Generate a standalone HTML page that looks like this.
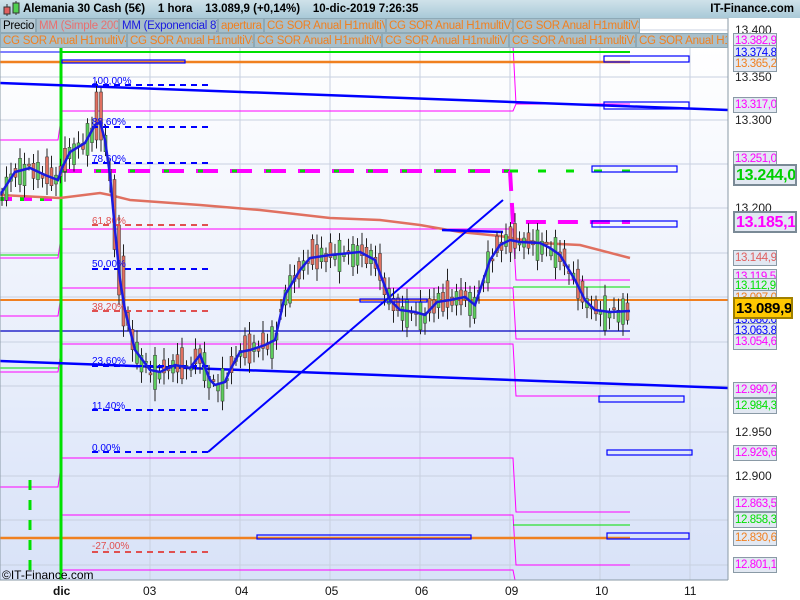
<!DOCTYPE html>
<html><head><meta charset="utf-8"><style>
body{margin:0;width:800px;height:600px;overflow:hidden;font-family:"Liberation Sans",sans-serif;background:#fff;position:relative}
#hdr{position:absolute;left:0;top:0;width:800px;height:18px;background:linear-gradient(#cfe2ea,#a9c9d8);font-size:11.5px;font-weight:bold;line-height:18px;z-index:2}
.tab{position:absolute;height:15px;line-height:14px;font-size:11.5px;letter-spacing:-0.25px;background:#a8bfca;border:1px solid #8ea9b6;box-sizing:border-box;padding-left:2px;color:#f08020;white-space:nowrap;overflow:hidden;z-index:2}
.lab{position:absolute;left:733px;width:44px;height:16px;line-height:15px;font-size:11.5px;background:#e2e8f2;border:1px solid #8a9aa6;box-sizing:border-box;padding-left:1px;letter-spacing:-0.4px;white-space:nowrap;overflow:hidden}
.big{width:64px;height:22px;line-height:19px;font-size:16px;font-weight:bold;border:2px solid #7a8a96;letter-spacing:-0.3px}
.ax{position:absolute;left:735px;font-size:12px;color:#222}
.dx{position:absolute;top:584px;font-size:12px;color:#111}
</style></head><body>
<div id="hdr">
<svg width="22" height="18" style="position:absolute;left:2px;top:0"><line x1="5" y1="4" x2="5" y2="16" stroke="#333"/><rect x="2" y="7" width="6" height="7" fill="#e06060" stroke="#333"/><line x1="14" y1="1" x2="14" y2="15" stroke="#333"/><rect x="11" y="3" width="6" height="10" fill="#50d050" stroke="#333"/></svg>
<span style="position:absolute;left:23px">Alemania 30 Cash (5€)&nbsp;&nbsp;&nbsp; 1 hora&nbsp;&nbsp;&nbsp; 13.089,9 (+0,14%)&nbsp;&nbsp;&nbsp; 10-dic-2019 7:26:35</span>
<span style="position:absolute;right:6px">IT-Finance.com</span>
</div>
<svg id="c" width="800" height="600" style="position:absolute;left:0;top:0" xmlns="http://www.w3.org/2000/svg">
<defs><linearGradient id="bg" x1="0" y1="0" x2="0" y2="1"><stop offset="0" stop-color="#ffffff"/><stop offset="1" stop-color="#d8e2f8"/></linearGradient><clipPath id="cp"><rect x="0" y="48" width="728" height="532"/></clipPath></defs>
<rect x="0" y="48" width="728" height="532" fill="url(#bg)"/>
<g id="grid" stroke="#c8d0e0" stroke-width="1"></g>
<g id="g" clip-path="url(#cp)"></g>
<rect x="0" y="18" width="728" height="562" fill="none" stroke="#8a9aa6"/>
<rect x="0" y="580" width="800" height="20" fill="#fff"/>
<line x1="0" y1="580" x2="728" y2="580" stroke="#8a9aa6"/>
<line x1="728" y1="18" x2="728" y2="580" stroke="#8a9aa6"/>
</svg>
<div class="tab" style="left:0;top:18px;width:36px;color:#000;background:#b5c9d3">Precio</div>
<div class="tab" style="left:36px;top:18px;width:83px;color:#e87070">MM (Simple 200)</div>
<div class="tab" style="left:119px;top:18px;width:99px;color:#1a1ae0">MM (Exponencial 8)</div>
<div class="tab" style="left:218px;top:18px;width:46px">apertura</div>
<div class="tab" style="left:264px;top:18px;width:122px">CG SOR Anual H1multiV</div>
<div class="tab" style="left:386px;top:18px;width:127px">CG SOR Anual H1multiV2</div>
<div class="tab" style="left:513px;top:18px;width:127px">CG SOR Anual H1multiV3</div>
<div class="tab" style="left:0;top:33px;width:127px">CG SOR Anual H1multiV4</div>
<div class="tab" style="left:127px;top:33px;width:127px">CG SOR Anual H1multiV5</div>
<div class="tab" style="left:254px;top:33px;width:128px">CG SOR Anual H1multiV6</div>
<div class="tab" style="left:382px;top:33px;width:127px">CG SOR Anual H1multiV7</div>
<div class="tab" style="left:509px;top:33px;width:127px">CG SOR Anual H1multiV8</div>
<div class="tab" style="left:636px;top:33px;width:92px">CG SOR Anual H1m</div>
<div class="ax" style="top:23px">13.400</div>
<div class="ax" style="top:70px">13.350</div>
<div class="ax" style="top:113px">13.300</div>
<div class="ax" style="top:201px">13.200</div>
<div class="ax" style="top:425px">12.950</div>
<div class="ax" style="top:469px">12.900</div>
<div id="labs"></div>
<div class="dx" style="left:53px;font-weight:bold">dic</div>
<div class="dx" style="left:143px">03</div>
<div class="dx" style="left:235px">04</div>
<div class="dx" style="left:325px">05</div>
<div class="dx" style="left:415px">06</div>
<div class="dx" style="left:505px">09</div>
<div class="dx" style="left:595px">10</div>
<div class="dx" style="left:684px">11</div>
<div style="position:absolute;left:2px;top:568px;font-size:12px">©IT-Finance.com</div>
<script>
(function(){
var NS="http://www.w3.org/2000/svg",g=document.getElementById('g'),gr=document.getElementById('grid');
function el(p,t,a){var e=document.createElementNS(NS,t);for(var k in a)e.setAttribute(k,a[k]);p.appendChild(e);return e;}
[60,150,240,330,420,510,600,690].forEach(function(x){el(gr,'line',{x1:x,y1:48,x2:x,y2:580})});
[30,77,120,164,208,253,297,342,386,432,476,520,565].forEach(function(y){el(gr,'line',{x1:0,y1:y,x2:728,y2:y})});
function L(x1,y1,x2,y2,c,w,d){var a={x1:x1,y1:y1,x2:x2,y2:y2,stroke:c,'stroke-width':w||1};if(d)a['stroke-dasharray']=d;el(g,'line',a);}
function P(pts,c,w,d){var a={points:pts,stroke:c,'stroke-width':w||1,fill:'none'};if(d)a['stroke-dasharray']=d;el(g,'polyline',a);}
var M='#ff00ff',GR='#00e000',OR='#f08020',BL='#0000ff';
P('0,45 58,45 62,45',M);P('0,140 58,140 62,111 513,111 516,104 630,104',M);
P('62,45 513,45 516,104',M);
P('0,258 58,258 62,229 513,229 516,280 630,280',M);P('0,255 58,255',GR);
P('0,316 58,316 62,288 513,288 516,339 630,339',M);
P('0,372 58,372 62,344 513,344 516,396 630,396',M);P('0,368 58,368',GR);
P('0,487 58,487 62,458 513,458 516,512 630,512',M);
P('0,538 58,538',M);P('62,515 513,515 516,565 630,565',M);P('62,570 513,570 516,585',M);
L(513,287,630,287,GR);L(513,525,630,525,GR);L(62,52,630,52,GR,2);L(0,52,60,52,BL);
L(0,331,630,331,'#0000c0',1.2);
L(0,62,630,62,OR,2.5);L(0,300,728,300,OR,2);L(0,538,630,538,OR,2.5);
L(61,48,61,580,GR,3);
P('0,199 60,199',M,4,'12,8');P('0,199 60,199',GR,4,'4,16');L(30,480,30,580,GR,3,'10,10');
P('60,171 510,171',M,4,'22,12');P('62,171 510,171',GR,3,'5,29');
P('510,171 513,222 630,222',M,4,'20,12');L(510,171,630,171,GR,3,'8,20');
P('0,195 60,198 100,193 110,195 130,200 200,205 260,210 330,218 380,220 420,225 460,232 500,236 540,243 580,245 630,258','#e07060',2.5);
L(0,83,728,110,BL,2.5);L(0,361,728,388,BL,2.5);L(208,452,503,200,BL,2);L(442,230,503,232,BL,2.5);
var fib=[[92,80,'100,00%',85,BL],[92,121,'88,60%',127,BL],[92,158,'78,60%',163,BL],[92,220,'61,80%',225,'#e05050'],[92,263,'50,00%',269,BL],[92,306,'38,20%',311,'#e05050'],[92,360,'23,60%',366,BL],[92,405,'11,40%',410,BL],[92,447,'0,00%',452,BL],[92,545,'-27,00%',552,'#e05050']];
var E=[[0,195],[15,172],[30,168],[45,175],[58,180],[62,168],[70,152],[85,143],[95,125],[100,122],[105,140],[110,175],[115,230],[120,280],[125,310],[135,350],[150,370],[160,372],[175,365],[190,368],[200,355],[210,380],[215,385],[225,382],[230,370],[240,352],[250,350],[265,345],[275,340],[285,295],[300,270],[310,258],[330,255],[360,252],[375,260],[390,300],[400,310],[415,312],[425,315],[437,302],[450,300],[465,297],[475,305],[480,290],[490,260],[500,245],[510,240],[520,242],[540,243],[550,248],[560,255],[575,280],[585,300],[595,310],[610,312],[630,311]];
function ema(x){for(var i=1;i<E.length;i++)if(x<=E[i][0]){var a=E[i-1],b=E[i];return a[1]+(b[1]-a[1])*(x-a[0])/(b[0]-a[0]);}return 311;}
var cg=el(g,'g',{});
for(var x=2,i=0;x<630;x+=4.5,i++){
 var c=ema(x),n=Math.sin(i*1.7)*12+Math.sin(i*0.43)*8,o=c+n,cl=c-n*0.6+Math.sin(i*2.9)*5;
 if(x>93&&x<102){o=92;cl=140}
 if(x>114&&x<128){o=c-45;cl=c+25}
 var tp=Math.min(o,cl),h=Math.max(2,Math.abs(o-cl));
 el(cg,'line',{x1:x,y1:tp-4-Math.abs(Math.sin(i))*8,x2:x,y2:tp+h+4+Math.abs(Math.cos(i*1.3))*8,stroke:'#222','stroke-width':1});
 el(cg,'rect',{x:x-1.5,y:tp,width:3,height:h,fill:cl<o?'#5ccc5c':'#e07060',stroke:'#333','stroke-width':0.5});
}
fib.forEach(function(f){var t=el(g,'text',{x:f[0],y:f[1]+4,fill:f[4],'font-size':10,'font-family':'Liberation Sans'});t.textContent=f[2];L(92,f[3],208,f[3],f[4],2,'6,5');});
[[62,60,123,3],[604,56,85,6],[604,102,85,7],[592,166,85,6],[592,221,85,6],[360,299,67,3],[599,396,85,6],[607,450,85,5],[257,535,214,4],[607,533,82,6]].forEach(function(b){el(g,'rect',{x:b[0],y:b[1],width:b[2],height:b[3],fill:'none',stroke:BL,'stroke-width':1.2})});
P(E.map(function(p){return p.join(',')}).join(' '),'#1a1ae0',2.5);
var labs=[[41,'13.382,9',M],[53,'13.374,8',BL],[64,'13.365,2',OR],[105,'13.317,0',M],[159,'13.251,0',M],[258,'13.144,9','#e06060'],[277,'13.119,5',M],[286,'13.112,9',GR],[298,'13.097,0',OR],[320,'13.080,0',BL],[331,'13.063,8',BL],[342,'13.054,6',M],[390,'12.990,2',M],[406,'12.984,3',GR],[453,'12.926,6',M],[504,'12.863,5',M],[520,'12.858,3',GR],[538,'12.830,6',OR],[565,'12.801,1',M]];
var H='';labs.forEach(function(l){H+='<div class="lab" style="top:'+(l[0]-8)+'px;color:'+l[2]+'">'+l[1]+'</div>';});
H+='<div class="lab big" style="top:164px;color:#00d000">13.244,0</div>';
H+='<div class="lab big" style="top:211px;color:#ff00ff">13.185,1</div>';
H+='<div class="lab big" style="top:297px;color:#000;background:#ffc800;border-color:#a08000;width:60px;font-size:15px">13.089,9</div>';
document.getElementById('labs').innerHTML=H;
})();
</script>
</body></html>
